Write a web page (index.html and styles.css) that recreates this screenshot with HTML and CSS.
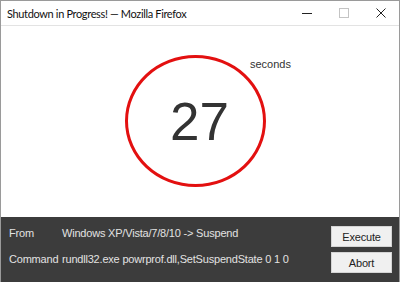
FILE: index.html
```html
<!DOCTYPE html>
<html>
<head>
<meta charset="utf-8">
<link rel="stylesheet" href="styles.css">
</head>
<body>
<div class="window">
  <div class="titlebar">
    <span class="title">Shutdown in Progress! — Mozilla Firefox</span>
    <div class="controls">
      <svg class="ctl" width="10" height="10" viewBox="0 0 10 10"><path d="M0 5.5H10" stroke="#222" stroke-width="1"/></svg>
      <svg class="ctl" width="10" height="10" viewBox="0 0 10 10"><rect x="0.5" y="0.5" width="9" height="9" fill="none" stroke="#c4c4c4" stroke-width="1"/></svg>
      <svg class="ctl" width="10" height="10" viewBox="0 0 10 10"><path d="M0.5 0.5L9.5 9.5M9.5 0.5L0.5 9.5" stroke="#222" stroke-width="1"/></svg>
    </div>
  </div>
  <div class="content">
    <div class="ring">
      <span class="count">27</span>
      <span class="unit">seconds</span>
    </div>
  </div>
  <div class="panel">
    <div class="info">
      <div class="row"><span class="label">From</span><span class="value">Windows XP/Vista/7/8/10 -&gt; Suspend</span></div>
      <div class="row"><span class="label">Command</span><span class="value">rundll32.exe powrprof.dll,SetSuspendState 0 1 0</span></div>
    </div>
    <div class="buttons">
      <button class="btn">Execute</button>
      <button class="btn">Abort</button>
    </div>
  </div>
</div>
</body>
</html>
```
FILE: styles.css
```css
html, body {
  margin: 0;
  padding: 0;
  background: #fff;
}
.window {
  width: 400px;
  height: 282px;
  box-sizing: border-box;
  border: 1px solid #9a9a9a;
  border-bottom: none;
  display: flex;
  flex-direction: column;
  overflow: hidden;
  font-family: "Liberation Sans", Arial, sans-serif;
}
.titlebar {
  height: 24px;
  flex: none;
  display: flex;
  align-items: center;
  border-bottom: 1px solid #e3e3e3;
  padding-left: 6px;
  padding-right: 13px;
}
.title {
  font-family: "Lato", sans-serif;
  font-size: 11px;
  letter-spacing: -0.35px;
  color: #111;
  flex: 1;
}
.controls {
  display: flex;
  align-items: center;
  gap: 27px;
}
.ctl {
  display: block;
}
.content {
  flex: 1;
  background: #fff;
  padding-top: 29px;
  padding-left: 124px;
}
.ring {
  position: relative;
  width: 141px;
  height: 132px;
  box-sizing: border-box;
  border: 3px solid #e31010;
  border-radius: 50%;
  display: flex;
  align-items: center;
  justify-content: center;
}
.count {
  font-size: 53px;
  color: #333;
  line-height: 1;
  margin-left: 8px;
}
.unit {
  position: absolute;
  left: 122px;
  top: 0;
  font-size: 11px;
  color: #333;
}
.panel {
  height: 65px;
  flex: none;
  background: #3c3c3c;
  display: flex;
  justify-content: space-between;
  padding: 9px 7px 0 8px;
  box-sizing: border-box;
}
.info {
  display: flex;
  flex-direction: column;
  gap: 12px;
}
.row {
  display: flex;
  font-size: 11px;
  letter-spacing: -0.2px;
  color: #e2e2e2;
  line-height: 14px;
  white-space: nowrap;
}
.label {
  width: 53px;
  flex: none;
}
.buttons {
  display: flex;
  flex-direction: column;
  gap: 5px;
}
.btn {
  width: 61px;
  height: 21px;
  background: #f0f0f0;
  border: 1px solid #d4d4d4;
  font-family: "Liberation Sans", Arial, sans-serif;
  font-size: 11px;
  letter-spacing: -0.2px;
  color: #222;
  padding: 0;
}
```
